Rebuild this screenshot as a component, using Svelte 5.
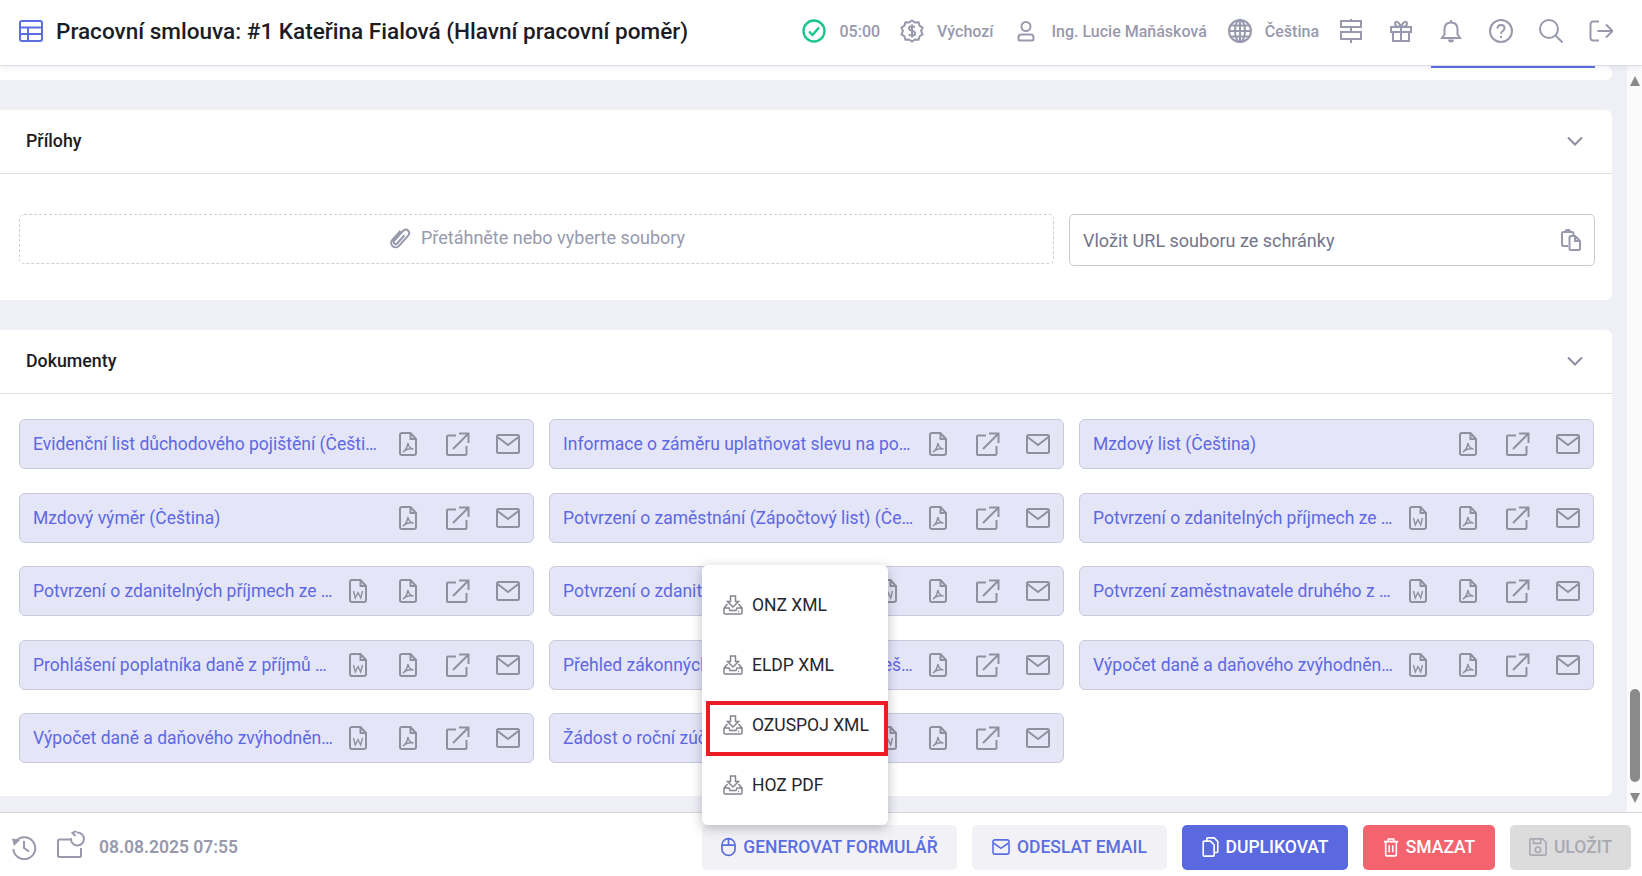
<script>
  const docs = [
    { name: "Evidenční list důchodového pojištění (Čeština)" },
    { name: "Informace o záměru uplatňovat slevu na poplatníka (Čeština)" },
    { name: "Mzdový list (Čeština)" },
    { name: "Mzdový výměr (Čeština)" },
    { name: "Potvrzení o zaměstnání (Zápočtový list) (Čeština)" },
    { name: "Potvrzení o zdanitelných příjmech ze závislé činnosti (Čeština)", word: true },
    { name: "Potvrzení o zdanitelných příjmech ze závislé činnosti 2 (Čeština)", word: true },
    { name: "Potvrzení o zdanitelných příjmech (Čeština)", word: true },
    { name: "Potvrzení zaměstnavatele druhého z poplatníků (Čeština)", word: true },
    { name: "Prohlášení poplatníka daně z příjmů ze závislé činnosti (Čeština)", word: true },
    { name: "Přehled zákonných odvodů pracovníka (Čeština)" },
    { name: "Výpočet daně a daňového zvýhodnění (Čeština)", word: true },
    { name: "Výpočet daně a daňového zvýhodnění 2 (Čeština)", word: true },
    { name: "Žádost o roční zúčtování záloh (Čeština)", word: true },
  ];
  const menu = ["ONZ XML", "ELDP XML", "OZUSPOJ XML", "HOZ PDF"];
</script>

{#snippet chevron()}
  <svg class="chevron" viewBox="0 0 18 10" width="18" height="10"><path d="M2 1.5l7 7 7-7" /></svg>
{/snippet}

{#snippet download()}
  <svg class="menu-icon" viewBox="0 0 20 20" width="20" height="20">
    <path d="M7.5 1h5v5.500h3L10 12 4.500 6.500h3z" />
    <path d="M4.500 9L1 13v5a1 1 0 0 0 1 1h16a1 1 0 0 0 1-1v-5l-3.500-4M1 13h5l1 2.500h6l1-2.500h5M15 16.500h1" />
  </svg>
{/snippet}

<div class="page">
  <header class="topbar">
    <svg class="table-icon" viewBox="0 0 24 24" width="24" height="24">
      <rect x="1" y="2" width="22" height="20" rx="2" />
      <path d="M1 8.500h22M1 15h22M9 8.500V22" />
    </svg>
    <h1>Pracovní smlouva: #1 Kateřina Fialová (Hlavní pracovní poměr)</h1>

    <div class="status">
      <svg class="ic green" viewBox="0 0 24 24" width="24" height="24"><circle cx="12" cy="12" r="10.500" /><path d="M7 12.500l3.500 3.500L17 8.500" /></svg>
      <span class="time">05:00</span>
      <svg class="ic" viewBox="0 0 24 24" width="24" height="24">
        <path d="M12 1.500l3 2 3.600-.3.900 3.400 3 2-1.400 3.400 1.400 3.400-3 2-.9 3.400-3.600-.3-3 2-3-2-3.600.3-.9-3.400-3-2 1.400-3.400L1.500 8.600l3-2 .9-3.400 3.600.3z" />
        <path d="M15 8.500c-.6-1-1.600-1.300-3-1.300-1.800 0-3 .9-3 2.300 0 3.200 6.200 1.600 6.200 4.800 0 1.400-1.300 2.400-3.200 2.400-1.500 0-2.600-.5-3.200-1.500M12 5.500v13" />
      </svg>
      <span class="currency">Výchozí</span>
      <svg class="ic user" viewBox="0 0 18 24" width="18" height="24">
        <circle cx="9" cy="7.500" r="4.500" /><path d="M3 21.500h12a1.500 1.500 0 0 0 1.500-1.500v-1.500a3 3 0 0 0-3-3h-9a3 3 0 0 0-3 3V20A1.500 1.500 0 0 0 3 21.500z" />
      </svg>
      <span class="person">Ing. Lucie Maňásková</span>
      <svg class="ic" viewBox="0 0 24 24" width="24" height="24">
        <circle cx="12" cy="12" r="11" /><ellipse cx="12" cy="12" rx="5" ry="11" /><path d="M1 12h22M2.500 6.500h19M2.500 17.500h19M12 1v22" />
      </svg>
      <span class="lang">Čeština</span>
      <div class="tools">
        <svg class="ic" viewBox="0 0 24 24" width="24" height="24"><path d="M12 0v2M12 8v5M12 20v4M2 2h20v6H2zM2 13h20v7H2z" /></svg>
        <svg class="ic" viewBox="0 0 24 24" width="24" height="24"><path d="M2 8h20v5H2zM4 13v9h16v-9M12 8v14M12 8C9 8 6 7 6 4.500S9.500 1.500 12 8c2.500-6.500 6-6 6-3.500S15 8 12 8z" /></svg>
        <svg class="ic" viewBox="0 0 24 24" width="24" height="24"><path d="M12 3.500c-4 0-6.500 2.500-6.500 7v5L3 19h18l-2.500-3.500v-5c0-4.500-2.500-7-6.500-7zM12 1v2.500" /><path class="fill" d="M9 20.500h6a3 3 0 0 1-6 0z" /></svg>
        <svg class="ic" viewBox="0 0 24 24" width="24" height="24"><circle cx="12" cy="12" r="11" /><path d="M8.500 9.500c0-2.200 1.500-3.500 3.500-3.500s3.500 1.300 3.500 3.200c0 2.800-3.500 2.800-3.500 5.600M12 17v2" /></svg>
        <svg class="ic" viewBox="0 0 24 24" width="24" height="24"><circle cx="10" cy="10" r="9" /><path d="M16.500 16.500l7 7" /></svg>
        <svg class="ic" viewBox="0 0 24 24" width="24" height="24"><path d="M10 2.500H4A2.500 2.500 0 0 0 1.500 5v14A2.500 2.500 0 0 0 4 21.500h6M8.500 12h15M17 5.500l6.500 6.500-6.500 6.500" /></svg>
      </div>
    </div>
  </header>

  <div class="middle">
    <main class="content">
      <div class="card cut-card"><span class="cut-line"></span></div>

      <section class="card">
        <div class="card-head"><h2>Přílohy</h2>{@render chevron()}</div>
        <div class="attach">
          <div class="dropzone">
            <svg class="clip" viewBox="0 0 24 24" width="24" height="24"><g transform="rotate(42 12 12)"><path d="M7.500 6.500v12a4.500 4.500 0 0 0 9 0V4.500a3.500 3.500 0 0 0-7 0V18a2 2 0 0 0 4 0V7" /></g></svg>
            <span>Přetáhněte nebo vyberte soubory</span>
          </div>
          <div class="url-field">
            <span>Vložit URL souboru ze schránky</span>
            <svg class="ic paste" viewBox="0 0 20 22" width="20" height="22"><path d="M7 17H2.500A1.500 1.500 0 0 1 1 15.500v-11A1.500 1.500 0 0 1 2.500 3H11a1.500 1.500 0 0 1 1.500 1.500V7M4.500 3a2.200 2.200 0 0 1 4.500 0" /><path d="M8.500 8.500A1.500 1.500 0 0 1 10 7h4l5 5v7.500a1.500 1.500 0 0 1-1.500 1.500H10a1.500 1.500 0 0 1-1.500-1.500zM14 7v5h5" /></svg>
          </div>
        </div>
      </section>

      <section class="card">
        <div class="card-head"><h2>Dokumenty</h2>{@render chevron()}</div>
        <div class="docs">
          {#each docs as doc}
            <div class="doc">
              <span class="doc-name">{doc.name}</span>
              {#if doc.word}
                <svg class="doc-icon file word" viewBox="0 0 20 24" width="20" height="24"><path d="M2 3a2 2 0 0 1 2-2h8.500L18 7v14a2 2 0 0 1-2 2H4a2 2 0 0 1-2-2zM12.500 1v6H18" /><path class="thin" d="M5.500 12l1.800 7 2.700-5.500 2.700 5.500 1.800-7" /></svg>
              {/if}
              <svg class="doc-icon file" viewBox="0 0 20 24" width="20" height="24"><path d="M2 3a2 2 0 0 1 2-2h8.500L18 7v14a2 2 0 0 1-2 2H4a2 2 0 0 1-2-2zM12.500 1v6H18" /><path class="thin" d="M5 20c2-1 4-4 5-9 .5 4 2 5.500 5.500 6-3.500-.5-8 .5-10.500 3z" /></svg>
              <svg class="doc-icon open" viewBox="0 0 24 24" width="24" height="24"><path d="M10 3.500H2a1 1 0 0 0-1 1V22a1 1 0 0 0 1 1h17.500a1 1 0 0 0 1-1v-8M7 17L22.500 1.500M13 1.500h9.500V11" /></svg>
              <svg class="doc-icon mail-ic" viewBox="0 0 24 20" width="24" height="20"><rect x="1" y="1" width="22" height="18" rx="1.500" /><path d="M1.500 3l10.500 8 10.500-8" /></svg>
            </div>
          {/each}
        </div>
      </section>
    </main>

    <div class="scrollbar">
      <span class="arrow up"></span>
      <span class="thumb"></span>
      <span class="arrow down"></span>
    </div>
  </div>

  <footer class="bottombar">
    <svg class="ic hist" viewBox="0 0 26 26" width="26" height="26"><path d="M4.500 7.500A11 11 0 1 1 2.300 15M13 7v7l5 3.500" /><path class="fill" d="M1 4.500l8 1.500-6 6z" /></svg>
    <svg class="ic rest" viewBox="0 0 30 30" width="30" height="30"><path d="M14 9.500H3.500A1.500 1.500 0 0 0 2 11v15a1 1 0 0 0 1 1h21a1 1 0 0 0 1-1v-8" /><path d="M20.500 2.500a6.500 6.500 0 1 1-5.500 5.500M20 1l-3.500 2 3 3" /></svg>
    <span class="stamp">08.08.2025 07:55</span>
    <div class="actions">
      <button class="soft">
        <svg viewBox="0 0 16 20" width="15" height="20"><rect x="1" y="1" width="14" height="18" rx="7" /><path d="M8 1v7M1 8h14" /></svg>
        GENEROVAT FORMULÁŘ
      </button>
      <button class="soft mail">
        <svg viewBox="0 0 20 18" width="18" height="16"><rect x="1" y="1" width="18" height="16" rx="2" /><path d="M1.500 4.500l8.500 6 8.500-6" /></svg>
        ODESLAT EMAIL
      </button>
      <button class="primary">
        <svg viewBox="0 0 18 22" width="17" height="20"><path d="M5 4.500V2a1 1 0 0 1 1-1h7l4 4v11a1 1 0 0 1-1 1h-3M2 4.500h7l4 4V20a1 1 0 0 1-1 1H2a1 1 0 0 1-1-1V5.500a1 1 0 0 1 1-1z" /></svg>
        DUPLIKOVAT
      </button>
      <button class="danger">
        <svg viewBox="0 0 18 22" width="16" height="20"><path d="M1 5h16M6 5V2h6v3M3 5v15a1 1 0 0 0 1 1h10a1 1 0 0 0 1-1V5M7 9v8M11 9v8" /></svg>
        SMAZAT
      </button>
      <button class="disabled">
        <svg viewBox="0 0 20 20" width="18" height="18"><path d="M2 1h13l4 4v13a1 1 0 0 1-1 1H2a1 1 0 0 1-1-1V2a1 1 0 0 1 1-1zM5 1v5h8V1" /><circle cx="10" cy="13" r="3" /></svg>
        ULOŽIT
      </button>
    </div>
  </footer>

  <div class="dropdown">
    {#each menu as item}
      <div class="menu-item">{@render download()}<span>{item}</span></div>
    {/each}
    <span class="marker"></span>
  </div>
</div>

<style>
  :global(body) {
    margin: 0;
    overflow: hidden;
    font-family: Roboto, "Liberation Sans", sans-serif;
  }

  svg {
    fill: none;
    flex: none;
  }

  .page {
    position: relative;
    display: flex;
    flex-direction: column;
    height: 876px;
    overflow: hidden;
    background: #fff;
  }

  .topbar {
    position: relative;
    z-index: 2;
    display: flex;
    align-items: center;
    flex: none;
    height: 66px;
    padding: 0 29px 3px 19px;
    box-sizing: border-box;
    background: #fff;
    border-bottom: 1px solid #dcdce6;
    box-shadow: 0 2px 6px rgba(80, 80, 120, 0.08);
  }

  .table-icon {
    stroke: #5b6ee1;
    stroke-width: 2;
  }

  h1 {
    margin: 0 0 0 13px;
    font-size: 22.550px;
    font-weight: 500;
    color: #1c1c24;
    white-space: nowrap;
  }

  .status {
    display: flex;
    align-items: center;
    margin-left: auto;
    font-size: 16px;
    font-weight: 500;
    color: #9899ac;
  }

  .ic {
    stroke: #9899ac;
    stroke-width: 2;
  }

  .ic .fill {
    fill: #9899ac;
    stroke: none;
  }

  .ic.green {
    stroke: #1bc58d;
    stroke-width: 2.400;
  }

  .time {
    margin: 0 20px 0 13px;
  }

  .currency {
    margin: 0 24px 0 13px;
  }

  .person {
    margin: 0 21px 0 16px;
  }

  .lang {
    margin: 0 20px 0 13px;
  }

  .tools {
    display: flex;
    gap: 26px;
  }

  .middle {
    display: flex;
    flex: 1;
    min-height: 0;
  }

  .content {
    flex: 1;
    min-width: 0;
    padding-right: 15px;
    background: #eff0f6;
  }

  .card {
    margin-bottom: 30px;
    background: #fff;
    border-radius: 0 6px 6px 0;
  }

  .cut-card {
    display: flex;
    justify-content: flex-end;
    height: 14px;
    padding-right: 17px;
  }

  .cut-line {
    width: 164px;
    height: 2px;
    background: #5b6ee1;
  }

  .card-head {
    display: flex;
    align-items: center;
    justify-content: space-between;
    height: 64px;
    padding: 0 28px 2px 26px;
    box-sizing: border-box;
    border-bottom: 1px solid #dcdce3;
  }

  h2 {
    margin: 0;
    font-size: 17.800px;
    font-weight: 500;
    color: #1c1c24;
  }

  .chevron {
    stroke: #8b8c9e;
    stroke-width: 2;
  }

  .attach {
    display: flex;
    gap: 15px;
    padding: 40px 17px 34px 19px;
  }

  .dropzone {
    display: flex;
    flex: 0 0 1035px;
    align-items: center;
    justify-content: center;
    gap: 9px;
    height: 50px;
    padding-bottom: 3px;
    box-sizing: border-box;
    border: 1px dashed #cfcfd6;
    border-radius: 5px;
    font-size: 18px;
    color: #9899ac;
  }

  .clip {
    stroke: #9899ac;
    stroke-width: 2;
  }

  .url-field {
    display: flex;
    flex: 1;
    align-items: center;
    justify-content: space-between;
    height: 52px;
    padding: 0 13px;
    box-sizing: border-box;
    border: 1px solid #c9cad4;
    border-radius: 5px;
    font-size: 18px;
    color: #74758a;
  }

  .docs {
    display: grid;
    grid-template-columns: repeat(3, 515px);
    grid-auto-rows: 50px;
    gap: 23.500px 15px;
    padding: 25px 0 33px 19px;
  }

  .doc {
    display: flex;
    align-items: center;
    padding: 0 13px;
    box-sizing: border-box;
    background: #e4e6f8;
    border: 1px solid #c9cad9;
    border-radius: 6px;
  }

  .doc-name {
    flex: 1;
    min-width: 0;
    margin-right: 13px;
    overflow: hidden;
    font-size: 17.500px;
    color: #5f68e2;
    text-overflow: ellipsis;
    white-space: nowrap;
  }

  .doc-icon {
    stroke: #8f909f;
    stroke-width: 2;
  }

  .doc-icon.word {
    margin-right: 30px;
  }

  .doc-icon.open {
    margin-left: 28px;
  }

  .doc-icon.mail-ic {
    margin-left: 26px;
  }

  .doc-icon .thin {
    stroke-width: 1.400;
  }

  .scrollbar {
    display: flex;
    flex: 0 0 15px;
    flex-direction: column;
    align-items: center;
    box-sizing: border-box;
    padding-top: 10px;
    background: #fbfbfb;
  }

  .arrow {
    width: 0;
    height: 0;
    border-left: 5.500px solid transparent;
    border-right: 5.500px solid transparent;
  }

  .arrow.up {
    border-bottom: 10px solid #8a8a8a;
  }

  .thumb {
    width: 10px;
    height: 93px;
    margin-top: 603px;
    background: #8a8a8a;
    border-radius: 5px;
  }

  .arrow.down {
    margin-top: 11px;
    border-top: 10px solid #8a8a8a;
  }

  .bottombar {
    display: flex;
    align-items: center;
    flex: none;
    height: 64px;
    padding: 5px 11px 0 11px;
    box-sizing: border-box;
    background: #fff;
    border-top: 1px solid #d8d8e0;
  }

  .rest {
    margin-left: 19px;
    margin-top: -4px;
  }

  .stamp {
    margin-left: 13px;
    font-size: 17.500px;
    font-weight: 600;
    color: #9899ac;
  }

  .actions {
    display: flex;
    gap: 15px;
    margin-left: auto;
  }

  button {
    display: flex;
    align-items: center;
    justify-content: center;
    gap: 7px;
    height: 45px;
    padding: 0;
    border: 0;
    border-radius: 5px;
    font-family: inherit;
    font-size: 17.500px;
    font-weight: 500;
  }

  button svg {
    stroke: currentColor;
    stroke-width: 1.800;
  }

  .soft {
    width: 255px;
    background: #f2f2f6;
    color: #5b6ee1;
  }

  .soft.mail {
    width: 195px;
  }

  .primary {
    width: 166px;
    background: #5a69e0;
    color: #fff;
  }

  .danger {
    width: 132px;
    background: #f4646f;
    color: #fff;
  }

  .disabled {
    width: 121px;
    background: #dcdcdc;
    color: #a9a9b2;
  }

  .dropdown {
    position: absolute;
    top: 565px;
    left: 702px;
    z-index: 3;
    width: 186px;
    padding: 10px 0;
    box-sizing: border-box;
    background: #fff;
    border-radius: 6px;
    box-shadow: 0 3px 12px rgba(40, 40, 60, 0.3);
  }

  .menu-item {
    display: flex;
    align-items: center;
    gap: 9px;
    height: 60px;
    padding: 0 0 1px 21px;
    box-sizing: border-box;
    font-size: 17.500px;
    color: #26262e;
  }

  .menu-icon {
    stroke: #858590;
    stroke-width: 1.500;
  }

  .marker {
    position: absolute;
    top: 136px;
    left: 4px;
    width: 182px;
    height: 55px;
    box-sizing: border-box;
    border: 4.500px solid #ec1c24;
  }
</style>
